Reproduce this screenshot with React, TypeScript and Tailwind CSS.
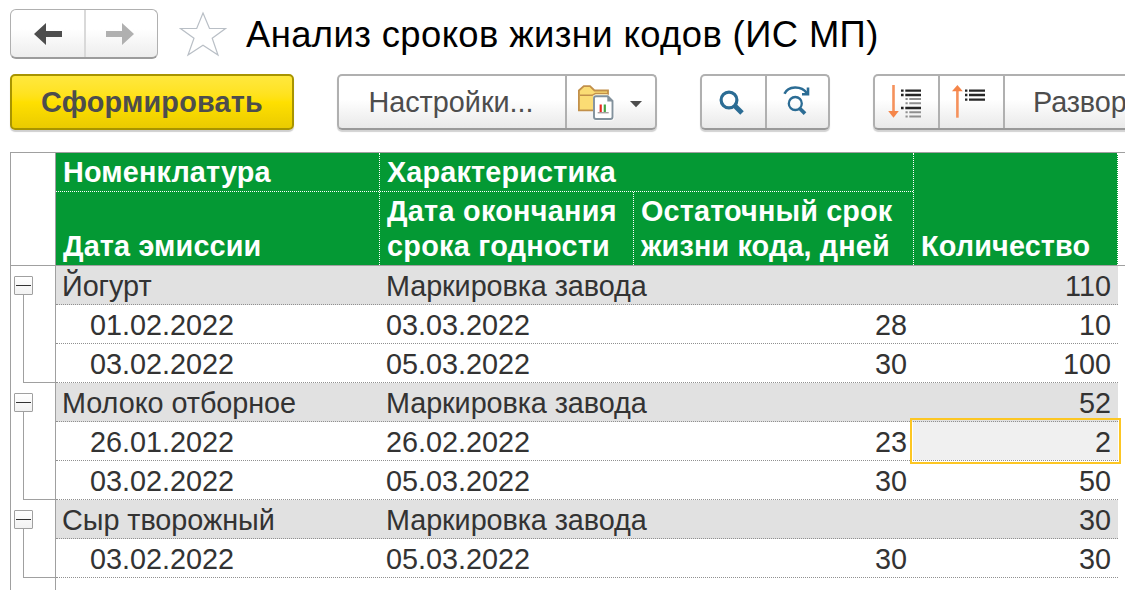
import type { ReactNode } from "react";

type Row = { date: string; until: string; left: string; qty: string; active?: boolean };
type Group = { name: string; kind: string; total: string; rows: Row[] };

const groups: Group[] = [
  {
    name: "Йогурт",
    kind: "Маркировка завода",
    total: "110",
    rows: [
      { date: "01.02.2022", until: "03.03.2022", left: "28", qty: "10" },
      { date: "03.02.2022", until: "05.03.2022", left: "30", qty: "100" },
    ],
  },
  {
    name: "Молоко отборное",
    kind: "Маркировка завода",
    total: "52",
    rows: [
      { date: "26.01.2022", until: "26.02.2022", left: "23", qty: "2", active: true },
      { date: "03.02.2022", until: "05.03.2022", left: "30", qty: "50" },
    ],
  },
  {
    name: "Сыр творожный",
    kind: "Маркировка завода",
    total: "30",
    rows: [{ date: "03.02.2022", until: "05.03.2022", left: "30", qty: "30" }],
  },
];

function ButtonGroup({ className, children }: { className: string; children: ReactNode }) {
  return (
    <div
      className={`flex h-14 shrink-0 divide-x-2 divide-[#b0b0b0] rounded-[5px] border-2 border-[#b0b0b0] border-b-[#999] bg-linear-to-b from-white from-45% to-[#e9e9e9] text-[#4d4d4d] shadow-[0_2px_1px_#d2d2d2] ${className}`}
    >
      {children}
    </div>
  );
}

function NavButtons() {
  return (
    <div className="flex h-[50px] w-[148px] shrink-0 rounded-[6px] border border-b-2 border-[#b0b0b0] border-b-[#9c9c9c] bg-linear-to-b from-white from-40% to-[#ededed]">
      <button className="w-[75px] border-r-2 border-[#d9d9d9]">
        <svg width="73" height="47" viewBox="0 0 73 47" fill="#4d4d4d">
          <path d="M23 24 35 13v8h16v6H35v8z" />
        </svg>
      </button>
      <button className="w-[71px]">
        <svg width="71" height="47" viewBox="0 0 71 47" fill="#b0b0b0">
          <path d="M48 24 36 13v8H20v6h16v8z" />
        </svg>
      </button>
    </div>
  );
}

function Star() {
  return (
    <svg width="48" height="46" viewBox="0 0 48 46" fill="none" stroke="#b9bfc6" strokeWidth="1.2">
      <path d="M24 2 30.5 17.5H46.5L33.2 27.3 39 44 24 34.3 9 44 15 27.3 1.5 17.5H17.7z" />
    </svg>
  );
}

function FolderReportIcon() {
  return (
    <svg width="88" height="52" viewBox="0 0 88 52">
      <path d="M11.9 34.3V14.5L16.8 10.1H23L27.5 14.5H41V34.3z" fill="#fbdc74" stroke="#c2904a" strokeWidth="1.8" />
      <path d="M13 19.3H25L28.5 17.6H41" fill="none" stroke="#c2904a" strokeWidth="1.5" />
      <path d="M29 18.5H41.2L47.3 25V41.8a2.7 2.7 0 0 1-2.7 2.7H28.7a2.7 2.7 0 0 1-2.7-2.7V21.5A3 3 0 0 1 29 18.5z" fill="#fff" />
      <path d="M29 20.3H40.8L45.5 25V41a2 2 0 0 1-2 2H29a2 2 0 0 1-2-2V22.3a2 2 0 0 1 2-2z" fill="#fff" stroke="#82919c" strokeWidth="1.9" />
      <path d="M40.3 20.3V25.5H45.5z" fill="#82919c" />
      <path d="M33.7 28.5v7.5" stroke="#e8291f" strokeWidth="2.2" />
      <path d="M37.8 28.5v7.5" stroke="#45a544" strokeWidth="2.2" />
      <path d="M30.7 36.7h11" stroke="#a8a0a0" strokeWidth="1.4" />
      <path d="M63 25H75L69 31.3z" fill="#4d4d4d" />
    </svg>
  );
}

function SearchIcon() {
  return (
    <svg width="64" height="52" viewBox="0 0 64 52" fill="none" stroke="#2b6c94">
      <circle cx="27" cy="24" r="7.9" strokeWidth="3.2" />
      <path d="M33 30 40 37" strokeWidth="5" />
    </svg>
  );
}

function SearchNextIcon() {
  return (
    <svg width="62" height="52" viewBox="0 0 62 52" fill="none" stroke="#2b6c94">
      <circle cx="28.3" cy="27.5" r="6.5" strokeWidth="2.3" />
      <path d="M32.8 32.5 38 37.7" strokeWidth="3.8" />
      <path d="M17.5 17.8C21 9.5 34.5 9.5 39.8 17" strokeWidth="2.6" />
      <path d="M41 11.5v6.7h-6" strokeWidth="2.6" />
    </svg>
  );
}

function ExpandIcon() {
  return (
    <svg width="63" height="52" viewBox="0 0 63 52" fill="none">
      <path d="M18.5 9v27" stroke="#f5915c" strokeWidth="2.6" />
      <path d="M13.2 35h10.6l-5.3 6.7z" fill="#f58549" />
      <path d="M26 14.7h2.6M30.3 14.7H46M26 19h2.6M30.3 19H46M26 32h2.6M30.3 32H46" stroke="#262626" strokeWidth="2.3" />
      <path d="M30.5 23h2.2M34.3 23H46M30.5 27.3h2.2M34.3 27.3H46M30.5 36.3h2.2M34.3 36.3H46M30.5 40.5h2.2M34.3 40.5H46" stroke="#8f8f8f" strokeWidth="2" />
    </svg>
  );
}

function CollapseIcon() {
  return (
    <svg width="63" height="52" viewBox="0 0 63 52" fill="none">
      <path d="M17.4 14v27.7" stroke="#f5915c" strokeWidth="2.6" />
      <path d="M12 15.2h10.8L17.4 9z" fill="#f58549" />
      <path d="M25 14.7h2.4M29 14.7H45M25 19h2.4M29 19H45M25 23.6h2.4M29 23.6H45" stroke="#262626" strokeWidth="2.3" />
    </svg>
  );
}

function GroupGutter() {
  return (
    <div className="flex w-11 shrink-0 flex-col pt-2.5">
      <div className="ml-[3px] flex size-[19px] shrink-0 items-center justify-center rounded-[1px] border border-[#a0a0a0] bg-linear-to-b from-white to-[#f2f2f2]">
        <div className="h-px w-[15px] bg-[#333]" />
      </div>
      <div className="ml-3 grow border-b border-l border-[#a0a0a0]" />
    </div>
  );
}

const rowClass =
  "grid h-[39px] w-[1062px] grid-cols-[324px_254px_280px_204px] border-b border-dotted border-[#909090] leading-[40px]";

export default function App() {
  return (
    <div className="h-[590px] w-[1125px] overflow-hidden bg-white font-['Liberation_Sans',Arial,sans-serif] text-[28.8px] text-[#333]">
      <header className="flex h-[74px] items-start pt-[9px] pl-[10px]">
        <NavButtons />
        <div className="ml-[21px] pt-[2px]">
          <Star />
        </div>
        <h1 className="ml-[19px] text-[36.4px] leading-[52px] tracking-[0.4px] whitespace-nowrap text-black">
          Анализ сроков жизни кодов (ИС МП)
        </h1>
      </header>

      <div className="flex h-[78px] items-start pl-[10px]">
        <button className="h-14 w-[284px] shrink-0 rounded-[5px] border-2 border-[#a89400] bg-linear-to-b from-[#ffe83d] via-[#ffe000] to-[#eacb00] pt-[2px] font-bold tracking-[0.2px] whitespace-nowrap text-[#4d4d4d] shadow-[0_2px_1px_#cfcfcf]">
          Сформировать
        </button>
        <ButtonGroup className="ml-[43px] w-80">
          <button className="w-[228px] pt-[2px] pr-[2px] whitespace-nowrap">Настройки...</button>
          <button>
            <FolderReportIcon />
          </button>
        </ButtonGroup>
        <ButtonGroup className="ml-[43px] w-[130px]">
          <button className="w-[65px]">
            <SearchIcon />
          </button>
          <button>
            <SearchNextIcon />
          </button>
        </ButtonGroup>
        <ButtonGroup className="ml-[43px] w-[290px]">
          <button>
            <ExpandIcon />
          </button>
          <button>
            <CollapseIcon />
          </button>
          <button className="grow pt-[2px] pl-7 text-left tracking-[-0.1px] whitespace-nowrap">Развор</button>
        </ButtonGroup>
      </div>

      <main className="ml-[10px] h-[438px] border-t border-l border-[#a0a0a0]">
        <div className="flex h-[113px] border-b border-[#a0a0a0]">
          <div className="w-11 shrink-0" />
          <div className="flex w-[1063px] border-l border-[#a0a0a0] bg-[#049934] leading-[35px] font-bold tracking-[0.15px] text-white">
            <div className="flex w-[324px] flex-col border-r border-dotted border-white">
              <div className="h-[39px] border-b border-dotted border-white pl-[7px] leading-[38px]">Номенклатура</div>
              <div className="flex grow items-end pb-px pl-[7px]">Дата эмиссии</div>
            </div>
            <div className="w-[534px] border-r border-dotted border-white">
              <div className="h-[39px] border-b border-dotted border-white pl-[7px] leading-[38px]">Характеристика</div>
              <div className="flex h-[73px]">
                <div className="w-[254px] border-r border-dotted border-white pt-[2px] pl-[7px] tracking-[0.28px] whitespace-nowrap">
                  Дата окончания
                  <br />
                  срока годности
                </div>
                <div className="pt-[2px] pl-[7px] whitespace-nowrap">
                  Остаточный срок
                  <br />
                  жизни кода, дней
                </div>
              </div>
            </div>
            <div className="flex w-[204px] items-end border-r border-dotted border-white pb-px pl-[7px]">Количество</div>
          </div>
        </div>

        {groups.map((g) => (
          <section key={g.name} className="flex">
            <GroupGutter />
            <div className="border-l border-[#a0a0a0]">
              <div className={`${rowClass} bg-[#e1e1e1]`}>
                <span className="pl-[6px] tracking-[-0.05px]">{g.name}</span>
                <span className="col-span-2 pl-[6px] tracking-[-0.08px]">{g.kind}</span>
                <span className="pr-[7px] text-right">{g.total}</span>
              </div>
              {g.rows.map((r) => (
                <div key={r.date} className={rowClass}>
                  <span className="pl-[34px]">{r.date}</span>
                  <span className="pl-[6px]">{r.until}</span>
                  <span className="pr-[7px] text-right">{r.left}</span>
                  <span className={r.active ? "relative ml-[-1px] h-[38px] bg-[#f0f0f0] pr-[7px] text-right" : "pr-[7px] text-right"}>
                    {r.qty}
                    {r.active && <i className="absolute -top-1 -right-[3px] -bottom-1 -left-[3px] border-2 border-[#fcc623]" />}
                  </span>
                </div>
              ))}
            </div>
          </section>
        ))}
        <div className="ml-11 h-3 border-l border-[#a0a0a0]" />
      </main>
    </div>
  );
}
